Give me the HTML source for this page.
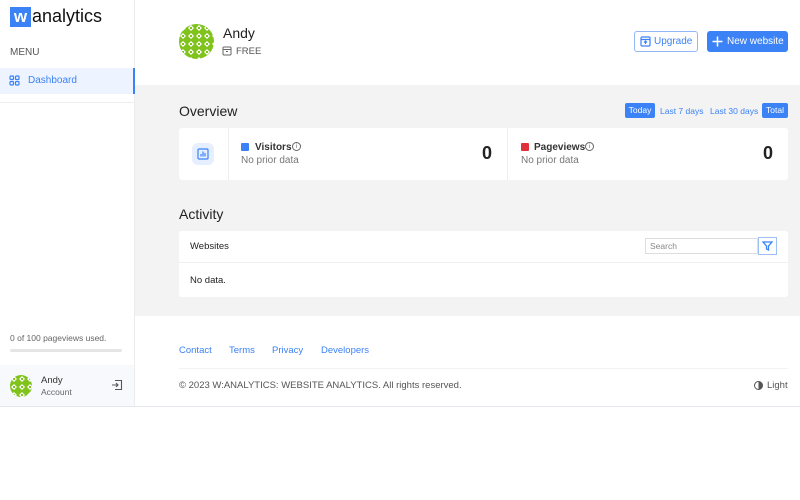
<!DOCTYPE html>
<html><head><style>
*{box-sizing:border-box;margin:0;padding:0}
body{width:800px;height:500px;background:#fff;font-family:"Liberation Sans",sans-serif;position:relative;overflow:hidden;color:#222}
.abs{position:absolute;white-space:nowrap}
.side{left:0;top:0;width:135px;height:406px;border-right:1px solid #ececec;background:#fff}
.gray{left:135px;top:85px;width:665px;height:231px;background:#f3f3f3}
.card{background:#fff;border-radius:3px}
.blue{color:#3b82f6}
</style></head><body>
<svg width="0" height="0" style="position:absolute"><defs>
<pattern id="pt" width="8" height="8" patternUnits="userSpaceOnUse"><rect width="8" height="8" fill="#7fc31c"/><path d="M4 1L7 4 4 7 1 4z" fill="#fff"/><rect x="3" y="3" width="2" height="2" fill="#7fc31c"/></pattern>
</defs></svg>
<div class="abs side">
  <div class="abs" style="left:10px;top:7px;width:21px;height:20px;background:#3b82f6;color:#fff;font-weight:bold;font-size:17px;text-align:center;line-height:19px">w</div>
  <div class="abs" style="left:32px;top:6px;font-size:18px;color:#111">analytics</div>
  <div class="abs" style="left:10px;top:47px;font-size:10px;color:#555">MENU</div>
  <div class="abs" style="left:0;top:68px;width:135px;height:26px;background:#eef4ff;border-right:2px solid #3b82f6"></div>
  <svg class="abs" style="left:9px;top:75px" width="11" height="11" viewBox="0 0 11 11" fill="none" stroke="#3b82f6" stroke-width="1.2"><rect x="1" y="1" width="3.5" height="3.5" rx="1"/><rect x="6.5" y="1" width="3.5" height="3.5" rx="1"/><rect x="1" y="6.5" width="3.5" height="3.5" rx="1"/><rect x="6.5" y="6.5" width="3.5" height="3.5" rx="1"/></svg>
  <div class="abs blue" style="left:28px;top:75px;font-size:10px">Dashboard</div>
  <div class="abs" style="left:0;top:102px;width:134px;height:1px;background:#eee"></div>
  <div class="abs" style="left:10px;top:333px;font-size:8.5px;color:#666">0 of 100 pageviews used.</div>
  <div class="abs" style="left:10px;top:349px;width:112px;height:3px;background:#e5e5e5;border-radius:2px"></div>
  <div class="abs" style="left:0;top:365px;width:134px;height:41px;background:#f7f9fc"></div>
  <svg class="abs" style="left:10px;top:375px" width="22" height="22"><circle cx="11" cy="11" r="11" fill="url(#pt)"/></svg>
  <div class="abs" style="left:41px;top:375px;font-size:9.5px;color:#333">Andy</div>
  <div class="abs" style="left:41px;top:387px;font-size:8.5px;color:#666">Account</div>
  <svg class="abs" style="left:111px;top:379px" width="12" height="12" viewBox="0 0 12 12" fill="none" stroke="#555" stroke-width="1.1"><path d="M4 1.5h6.5v9H4M1 6h6M5 4l2 2-2 2"/></svg>
</div>
<div class="abs" style="left:0;top:406px;width:800px;height:1px;background:#e6e6ee"></div>

<svg class="abs" style="left:179px;top:24px" width="35" height="35"><circle cx="17.5" cy="17.5" r="17.5" fill="url(#pt)"/></svg>
<div class="abs" style="left:223px;top:25px;font-size:14px;color:#222">Andy</div>
<svg class="abs" style="left:222px;top:46px" width="10" height="10" viewBox="0 0 10 10" fill="none" stroke="#666" stroke-width="1"><rect x="1" y="1" width="8" height="8" rx="1"/><path d="M1 3.5h8M4 5.5h2"/></svg>
<div class="abs" style="left:236px;top:46px;font-size:9.5px;color:#555">FREE</div>
<div class="abs" style="left:634px;top:31px;width:64px;height:21px;border:1px solid #93b8f5;border-radius:3px;background:#fff"></div>
<svg class="abs" style="left:640px;top:36px" width="11" height="11" viewBox="0 0 11 11" fill="none" stroke="#3b82f6" stroke-width="1.2"><rect x="1" y="1" width="9" height="9" rx="1"/><path d="M1 3.5h9M5.5 5v3M4 6.5l1.5-1.5 1.5 1.5"/></svg>
<div class="abs blue" style="left:654px;top:36px;font-size:10px">Upgrade</div>
<div class="abs" style="left:707px;top:31px;width:81px;height:21px;background:#3b82f6;border-radius:3px;color:#fff;font-size:10px;line-height:21px;padding-left:20px">New website</div>
<svg class="abs" style="left:712px;top:36px" width="11" height="11" viewBox="0 0 11 11" stroke="#fff" stroke-width="1.5"><path d="M5.5 0.5v10M0.5 5.5h10"/></svg>

<div class="abs gray"></div>
<div class="abs" style="left:179px;top:103px;font-size:14px;color:#222">Overview</div>
<div class="abs" style="left:625px;top:103px;width:30px;height:15px;background:#3b82f6;color:#fff;font-size:8.5px;text-align:center;line-height:15px;border-radius:2px">Today</div>
<div class="abs blue" style="left:660px;top:106px;font-size:8.5px">Last 7 days</div>
<div class="abs blue" style="left:710px;top:106px;font-size:8.5px">Last 30 days</div>
<div class="abs" style="left:762px;top:103px;width:26px;height:15px;background:#3b82f6;color:#fff;font-size:8.5px;text-align:center;line-height:15px;border-radius:2px">Total</div>

<div class="abs card" style="left:179px;top:128px;width:609px;height:52px"></div>
<div class="abs" style="left:228px;top:128px;width:1px;height:52px;background:#eee"></div>
<div class="abs" style="left:507px;top:128px;width:1px;height:52px;background:#eee"></div>
<div class="abs" style="left:192px;top:143px;width:22px;height:22px;background:#e5efff;border-radius:6px"></div>
<svg class="abs" style="left:197px;top:148px" width="12" height="12" viewBox="0 0 12 12" fill="none" stroke="#3b82f6" stroke-width="1.2"><rect x="1" y="1" width="10" height="10" rx="1"/><path d="M4 8.5V6M6 8.5V3.5M8 8.5V5"/></svg>
<div class="abs" style="left:241px;top:143px;width:8px;height:8px;background:#3b82f6;border-radius:1px"></div>
<div class="abs" style="left:255px;top:142px;font-size:10px;font-weight:bold;color:#333">Visitors</div>
<div class="abs" style="left:292px;top:142px;width:9px;height:9px;border:1px solid #666;border-radius:50%;font-size:6px;text-align:center;line-height:8px;color:#666">i</div>
<div class="abs" style="left:241px;top:155px;font-size:10px;color:#777">No prior data</div>
<div class="abs" style="left:482px;top:143px;font-size:18px;font-weight:bold;color:#222">0</div>
<div class="abs" style="left:521px;top:143px;width:8px;height:8px;background:#e0303c;border-radius:1px"></div>
<div class="abs" style="left:534px;top:142px;font-size:10px;font-weight:bold;color:#333">Pageviews</div>
<div class="abs" style="left:585px;top:142px;width:9px;height:9px;border:1px solid #666;border-radius:50%;font-size:6px;text-align:center;line-height:8px;color:#666">i</div>
<div class="abs" style="left:521px;top:155px;font-size:10px;color:#777">No prior data</div>
<div class="abs" style="left:763px;top:143px;font-size:18px;font-weight:bold;color:#222">0</div>

<div class="abs" style="left:179px;top:206px;font-size:14px;color:#222">Activity</div>
<div class="abs card" style="left:179px;top:231px;width:609px;height:66px"></div>
<div class="abs" style="left:179px;top:262px;width:609px;height:1px;background:#f0f0f0"></div>
<div class="abs" style="left:190px;top:241px;font-size:9.5px;color:#222">Websites</div>
<div class="abs" style="left:645px;top:238px;width:113px;height:16px;border:1px solid #ddd;font-size:8.5px;color:#888;padding:2px 4px">Search</div>
<div class="abs" style="left:758px;top:237px;width:19px;height:18px;border:1px solid #9cc0f7;background:#fff"></div>
<svg class="abs" style="left:762px;top:241px" width="11" height="10" viewBox="0 0 11 10" fill="none" stroke="#3b82f6" stroke-width="1.3"><path d="M1 1h9L6.5 5v4L4.5 8V5z"/></svg>
<div class="abs" style="left:190px;top:275px;font-size:9.5px;color:#222">No data.</div>

<div class="abs blue" style="left:179px;top:345px;font-size:9.5px">Contact</div>
<div class="abs blue" style="left:229px;top:345px;font-size:9.5px">Terms</div>
<div class="abs blue" style="left:272px;top:345px;font-size:9.5px">Privacy</div>
<div class="abs blue" style="left:321px;top:345px;font-size:9.5px">Developers</div>
<div class="abs" style="left:179px;top:368px;width:609px;height:1px;background:#f2f2f2"></div>
<div class="abs" style="left:179px;top:380px;font-size:9.5px;color:#555">© 2023 W:ANALYTICS: WEBSITE ANALYTICS. All rights reserved.</div>
<div class="abs" style="left:754px;top:381px;width:9px;height:9px;border:1px solid #555;border-radius:50%;background:linear-gradient(90deg,#fff 50%,#555 50%)"></div>
<div class="abs" style="left:767px;top:380px;font-size:9.5px;color:#555">Light</div>
</body></html>
